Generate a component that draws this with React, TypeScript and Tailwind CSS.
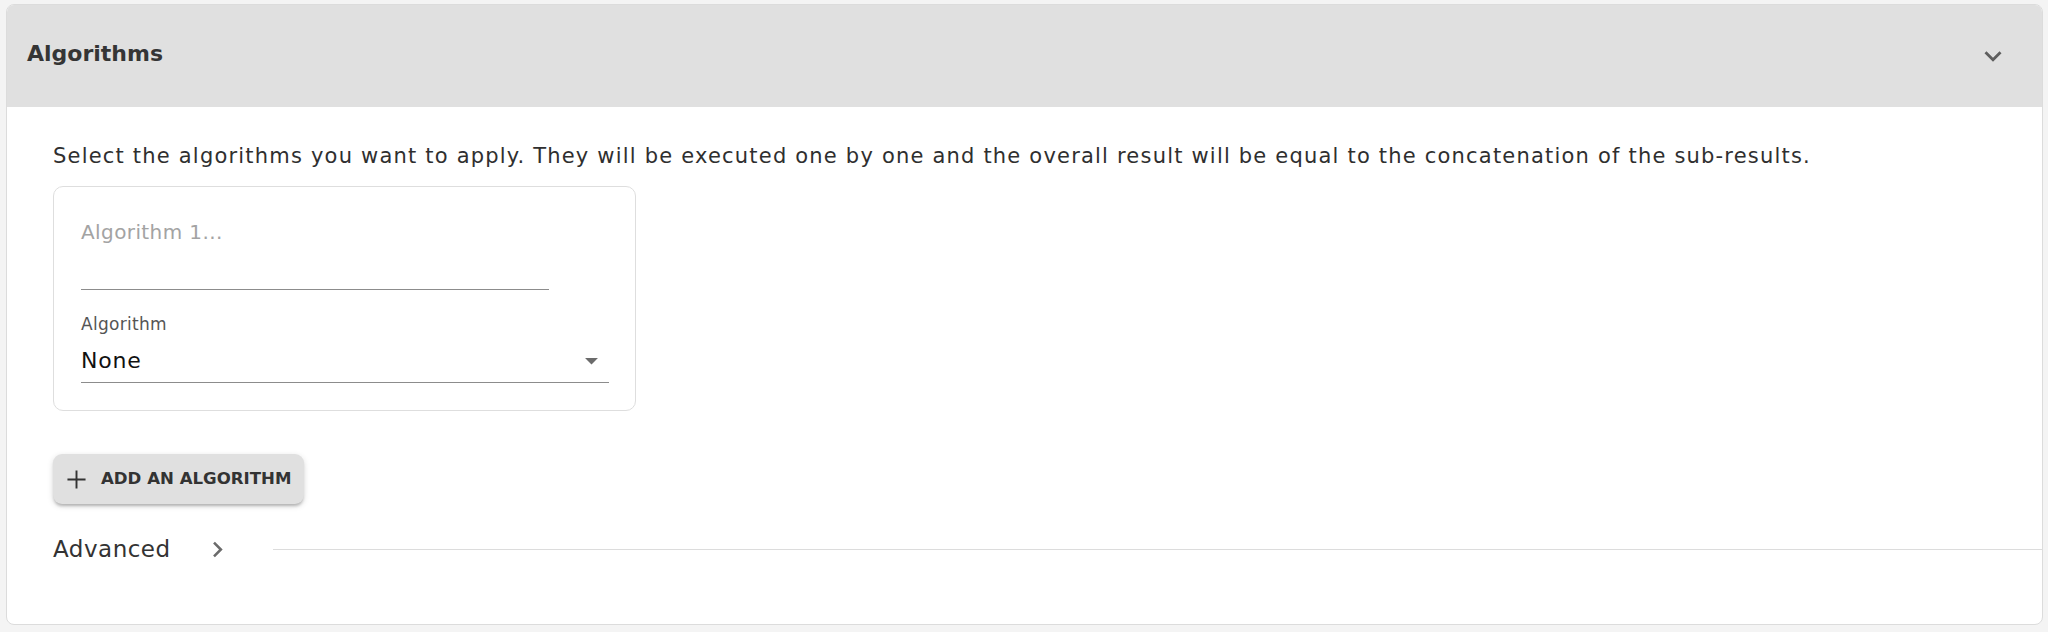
import React from "react";

function ExpandMore({ size = 34, className = "" }: { size?: number; className?: string }) {
  return (
    <svg width={size} height={size} viewBox="0 0 24 24" className={className} fill="currentColor">
      <path d="M16.59 8.59 12 13.17 7.41 8.59 6 10l6 6 6-6z" />
    </svg>
  );
}

function ChevronRight({ size = 31, className = "" }: { size?: number; className?: string }) {
  return (
    <svg width={size} height={size} viewBox="0 0 24 24" className={className} fill="currentColor">
      <path d="M10 6 8.59 7.41 13.17 12l-4.58 4.59L10 18l6-6z" />
    </svg>
  );
}

function Plus({ size = 31, className = "" }: { size?: number; className?: string }) {
  return (
    <svg width={size} height={size} viewBox="0 0 24 24" className={className} fill="currentColor">
      <path d="M19 12.75h-6.25V19h-1.5v-6.25H5v-1.5h6.25V5h1.5v6.25H19z" />
    </svg>
  );
}

function ArrowDropDown({ size = 31, className = "" }: { size?: number; className?: string }) {
  return (
    <svg width={size} height={size} viewBox="0 0 24 24" className={className} fill="currentColor">
      <path d="M7 10l5 5 5-5z" />
    </svg>
  );
}

export default function App() {
  return (
    <div className="min-h-screen bg-[#f4f4f4] pl-[6px] pr-[5px] pt-[4px] font-['DejaVu_Sans',sans-serif] text-[#333]">
      <div className="h-[621px] overflow-hidden rounded-[8px] border border-[#dcdcdc] bg-white">
        {/* Header */}
        <div className="flex h-[102px] items-center justify-between bg-[#e0e0e0] pl-[20px] pr-[32px]">
          <h2 className="mb-[5px] text-[22px] font-bold text-[#353535]">Algorithms</h2>
          <ExpandMore size={34} className="text-[#5f5f5f]" />
        </div>

        {/* Body */}
        <div className="pl-[46px] pt-[34px]">
          <p className="text-[21px] leading-[30px] tracking-[1.2px] text-[#2f2f2f]">
            Select the algorithms you want to apply. They will be executed one by one and the overall result will be equal to the concatenation of the sub-results.
          </p>

          <div className="mt-[15px] h-[225px] w-[583px] rounded-[10px] border border-[#dedede] px-[27px] pt-[30px]">
            <div className="h-[73px] w-[468px] border-b border-[#8c8c8c]">
              <div className="text-[20px] leading-[30px] tracking-[0.4px] text-[#a3a3a3]">Algorithm 1...</div>
            </div>
            <div className="mt-[23px] text-[17px] leading-[22px] tracking-[0.3px] text-[#555]">Algorithm</div>
            <div className="mt-[10px] flex w-[528px] items-center justify-between border-b border-[#8c8c8c] pb-[6px]">
              <span className="text-[22px] leading-[30px] tracking-[0.8px] text-[#111]">None</span>
              <ArrowDropDown size={31} className="mr-[2px] text-[#6b6b6b]" />
            </div>
          </div>

          <button className="mt-[43px] flex h-[50px] w-[251px] items-center gap-[9px] rounded-[9px] bg-[#e0e0e0] pl-[8px] shadow-[0_3px_3px_-1px_rgba(0,0,0,0.22),0_2px_6px_0_rgba(0,0,0,0.14)]">
            <Plus size={31} className="text-[#333]" />
            <span className="text-[16.6px] font-bold text-[#333]">ADD AN ALGORITHM</span>
          </button>

          <div className="mt-[25px] flex h-[40px] items-center">
            <span className="w-[120px] text-[23px] tracking-[0.5px] text-[#333]">Advanced</span>
            <ChevronRight size={31} className="ml-[29px] text-[#6b6b6b]" />
            <div className="ml-[40px] h-px flex-1 bg-[#dcdcdc]" />
          </div>
        </div>
      </div>
    </div>
  );
}
